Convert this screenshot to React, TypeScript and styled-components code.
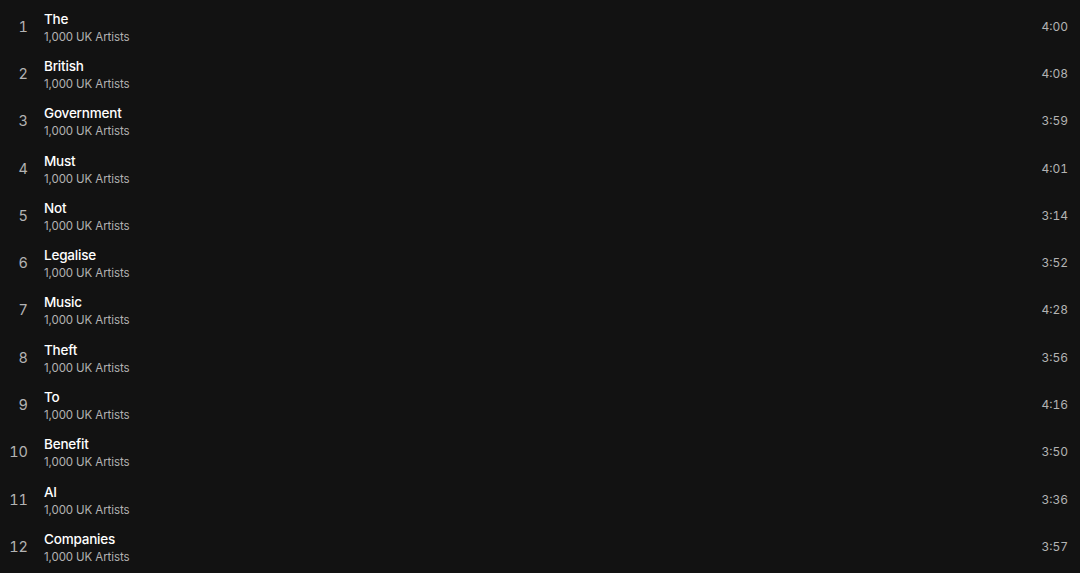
import React from "react";
import styled, { createGlobalStyle } from "styled-components";

const GlobalStyle = createGlobalStyle`
  html, body {
    margin: 0;
    padding: 0;
    background: #121212;
  }
  body {
    font-family: Inter, "Noto Sans", sans-serif;
    -webkit-font-smoothing: antialiased;
  }
`;

const TrackList = styled.div`
  width: 1080px;
  height: 573px;
  box-sizing: border-box;
  padding-top: 2.5px;
  background: #121212;
  overflow: hidden;
`;

const Row = styled.div`
  display: grid;
  grid-template-columns: 28px 1fr auto;
  column-gap: 16px;
  align-items: center;
  height: 47.3px;
  padding-right: 12px;
`;

const Index = styled.div`
  text-align: right;
  font-size: 14.5px;
  color: #b3b3b3;
  font-variant-numeric: tabular-nums;
`;

const Info = styled.div`
  display: flex;
  flex-direction: column;
  padding-top: 3px;
`;

const Title = styled.div`
  font-size: 13.5px;
  line-height: 18px;
  color: #ffffff;
  font-weight: 500;
  letter-spacing: -0.2px;
`;

const Sub = styled.div`
  font-size: 11.5px;
  line-height: 18px;
  color: #b3b3b3;
  letter-spacing: -0.1px;
`;

const Duration = styled.div`
  font-size: 12px;
  color: #b3b3b3;
  font-variant-numeric: tabular-nums;
`;

const tracks = [
  ["The", "4:00"],
  ["British", "4:08"],
  ["Government", "3:59"],
  ["Must", "4:01"],
  ["Not", "3:14"],
  ["Legalise", "3:52"],
  ["Music", "4:28"],
  ["Theft", "3:56"],
  ["To", "4:16"],
  ["Benefit", "3:50"],
  ["AI", "3:36"],
  ["Companies", "3:57"],
];

const App = () => (
  <>
    <GlobalStyle />
    <TrackList>
      {tracks.map(([title, time], idx) => (
        <Row key={idx}>
          <Index>{idx + 1}</Index>
          <Info>
            <Title>{title}</Title>
            <Sub>1,000 UK Artists</Sub>
          </Info>
          <Duration>{time}</Duration>
        </Row>
      ))}
    </TrackList>
  </>
);

export default App;
